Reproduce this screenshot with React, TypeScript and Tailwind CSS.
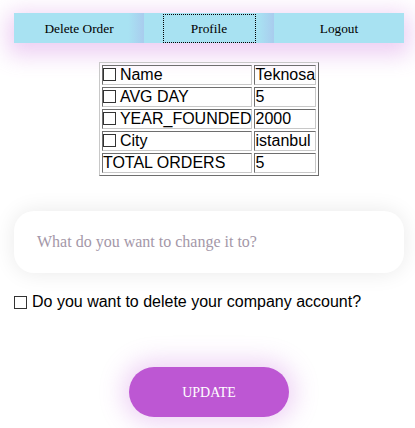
import React from "react";

const Box = () => (
  <span className="inline-block w-[13px] h-[13px] border border-[#333] bg-white align-[-1px] mr-[4px]" />
);

const cell =
  "p-0 leading-[18px] border border-t-[#6e6e6e] border-l-[#6e6e6e] border-b-[#c8c8c8] border-r-[#c8c8c8] whitespace-nowrap";

export default function App() {
  const rows: [string, string, boolean][] = [
    ["Name", "Teknosa", true],
    ["AVG DAY", "5", true],
    ["YEAR_FOUNDED", "2000", true],
    ["City", "istanbul", true],
    ["TOTAL ORDERS", "5", false],
  ];
  return (
    <div className="w-[415px] h-[428px] bg-white overflow-hidden">
      <div className="pt-[13px] ml-[14px] w-[390px]">
        <div className="flex h-[30px] shadow-[0_6px_22px_6px_rgba(200,110,220,0.33)] font-['Liberation_Serif',serif] text-[13.33px] text-black">
          <div className="relative w-[130px] flex items-center justify-center pt-[1px] bg-[linear-gradient(to_right,#a8e2f2_88%,#a9ccee_100%)]">
            <span>Delete Order</span>
          </div>
          <div className="relative w-[130px] flex items-center justify-center bg-[linear-gradient(to_right,#a8e2f2_88%,#a9ccee_100%)]">
            <span className="w-[93px] h-[29px] pt-[1px] border border-dotted border-black flex items-center justify-center">
              Profile
            </span>
          </div>
          <div className="w-[130px] flex items-center justify-center pt-[1px] bg-[#a8e2f2]">
            <span>Logout</span>
          </div>
        </div>

        <div className="flex justify-center mt-[19px]">
          <table className="border-separate border-spacing-[2px] border border-t-[#c8c8c8] border-l-[#c8c8c8] border-b-[#6e6e6e] border-r-[#6e6e6e] font-['Liberation_Sans',Arial,sans-serif] text-[16px] text-black">
            <tbody>
              {rows.map(([k, v, cb]) => (
                <tr key={k}>
                  <td className={cell}>
                    {cb && <Box />}
                    {k}
                  </td>
                  <td className={cell}>{v}</td>
                </tr>
              ))}
            </tbody>
          </table>
        </div>

        <div className="mt-[35px] h-[62px] rounded-[20px] bg-white shadow-[0_0_22px_rgba(0,0,0,0.09)] flex items-center pl-[23px] font-['Liberation_Serif',serif] text-[16px] text-[#a497a8]">
          What do you want to change it to?
        </div>

        <div className="mt-[20px] flex items-center font-['Liberation_Sans',Arial,sans-serif] text-[16px] text-black leading-[18px]">
          <span className="inline-block w-[13px] h-[13px] border border-[#333] bg-white mr-[5px]" />
          Do you want to delete your company account?
        </div>

        <div className="flex justify-center mt-[56px]">
          <div className="w-[160px] h-[50px] rounded-full bg-[#bd57d3] shadow-[0_0_24px_6px_rgba(190,90,215,0.28)] flex items-center justify-center text-white font-['Liberation_Serif',serif] text-[14px]">
            UPDATE
          </div>
        </div>
      </div>
    </div>
  );
}
